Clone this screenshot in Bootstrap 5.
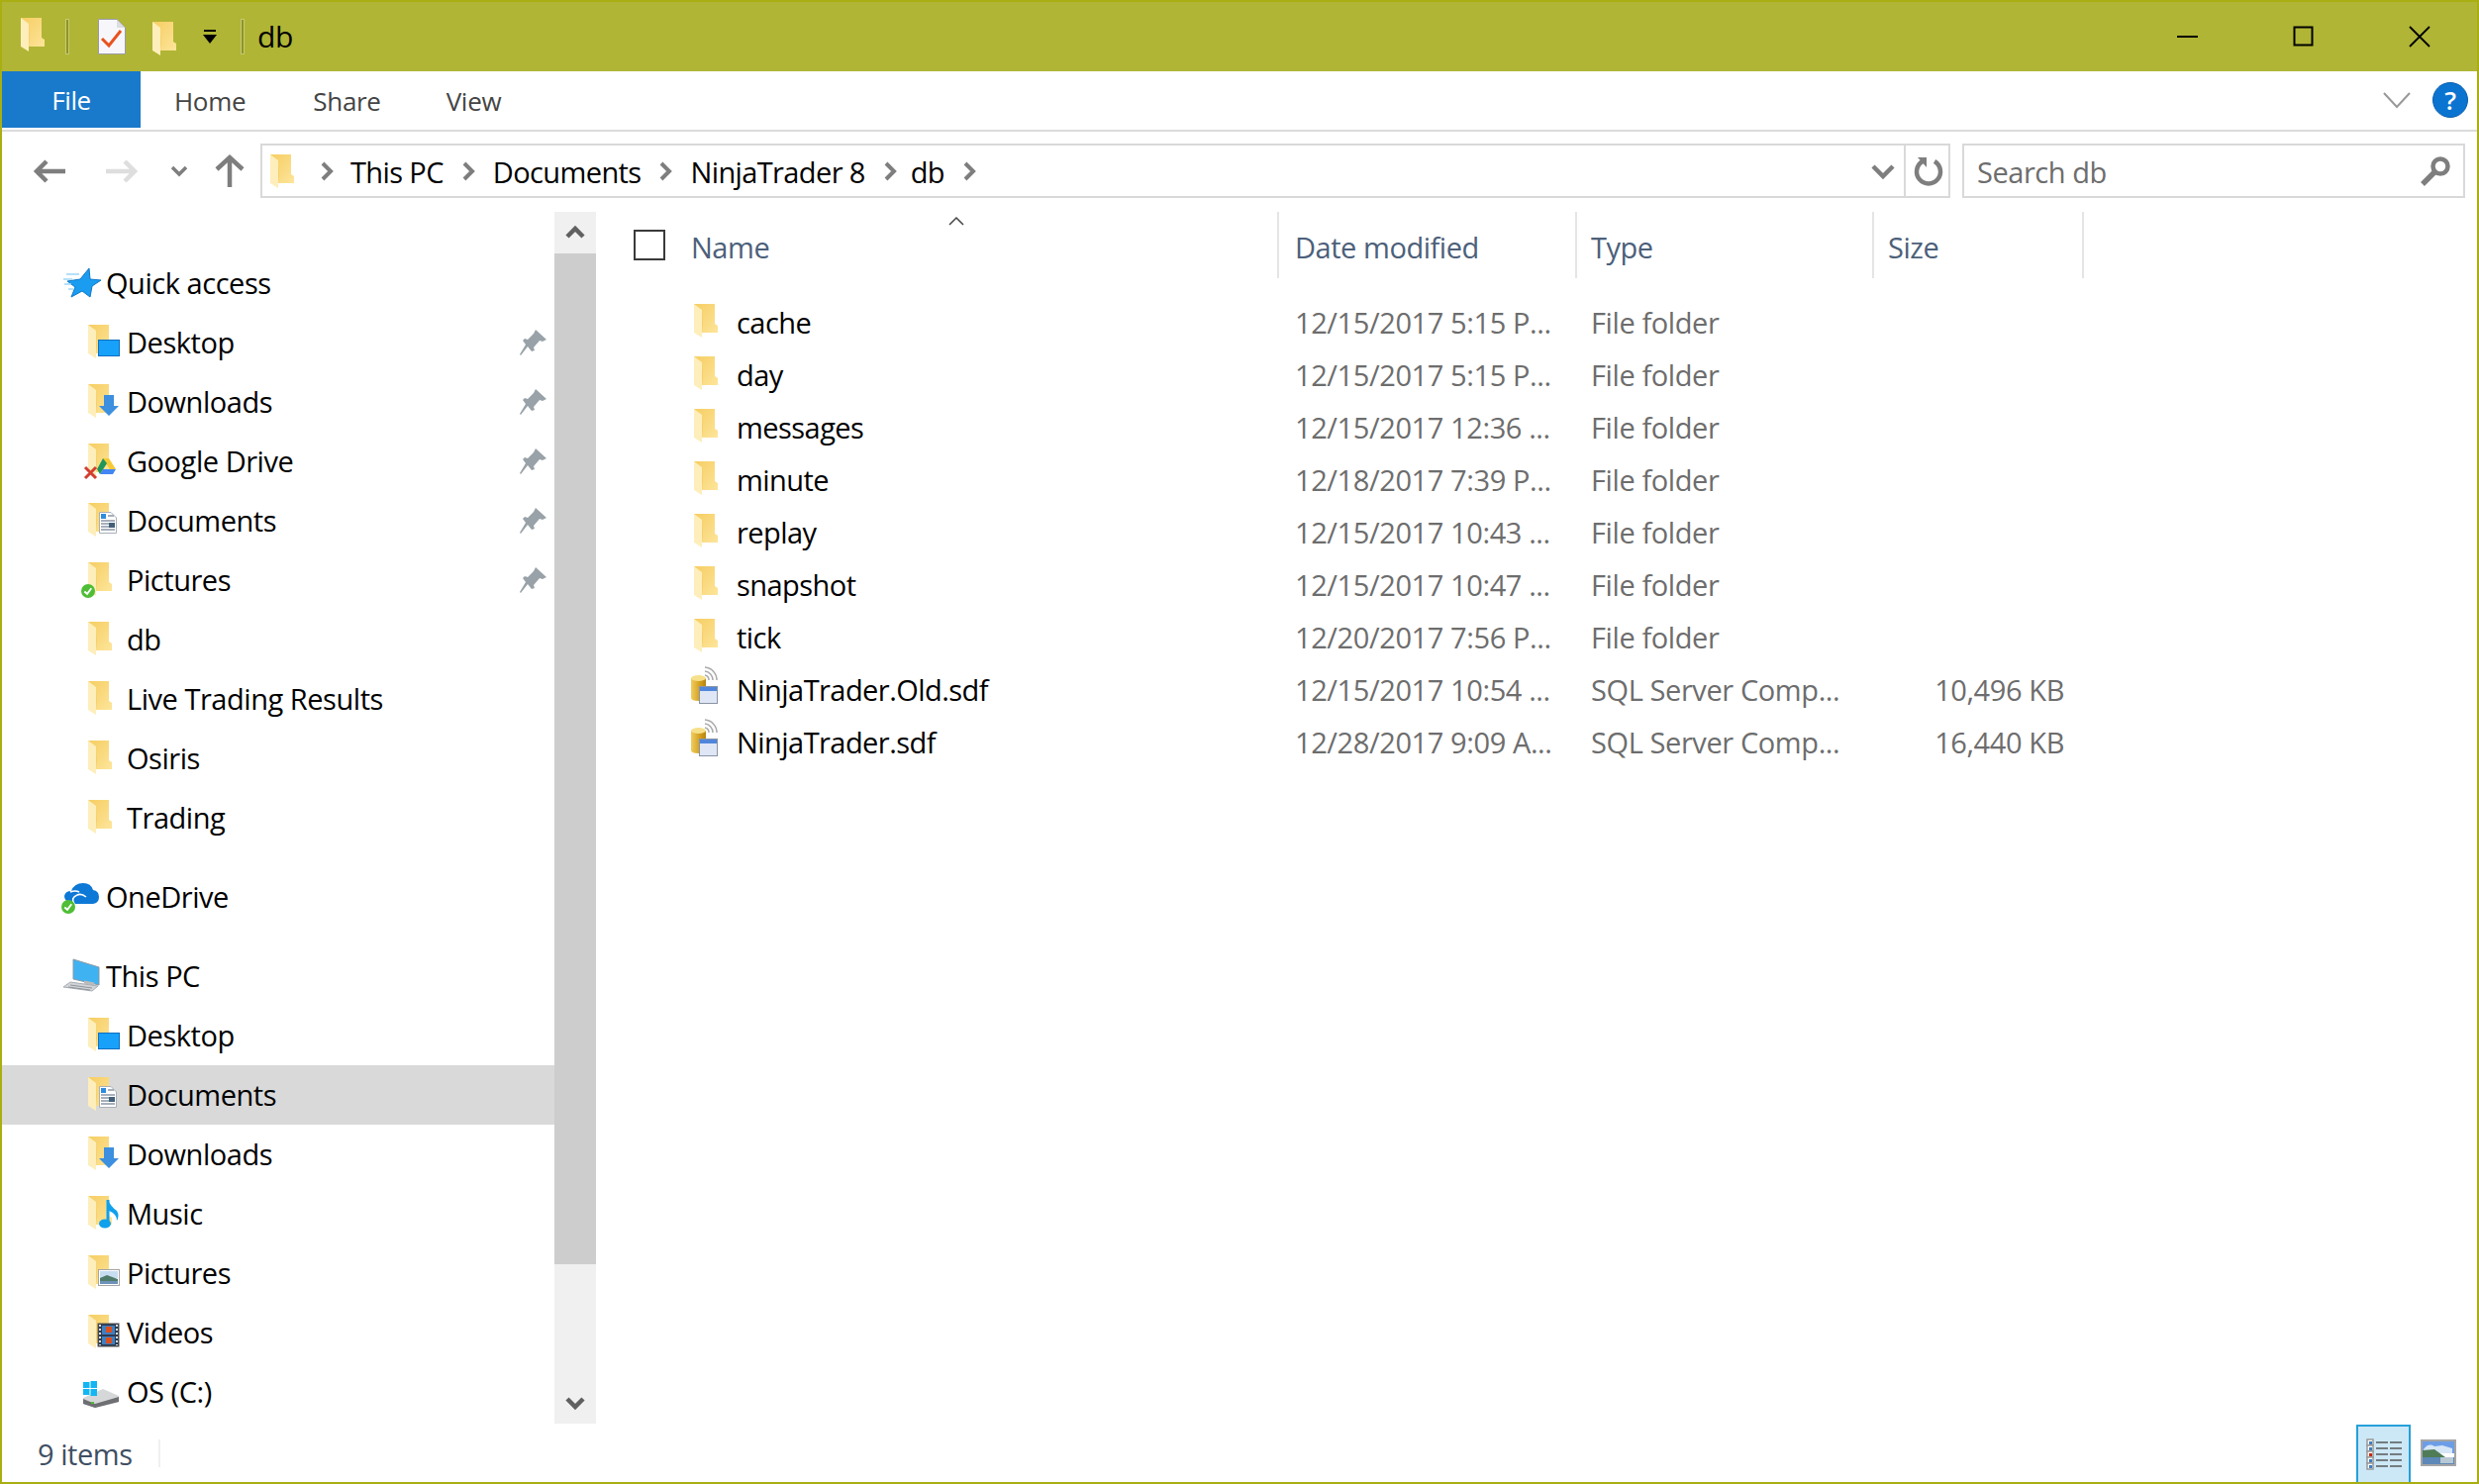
<!DOCTYPE html>
<html lang="en">
<head>
  <meta charset="UTF-8" />
  <title>db</title>
  <link href="https://cdn.jsdelivr.net/npm/bootstrap@5.3.0/dist/css/bootstrap.min.css" rel="stylesheet">
  <style>
    html, body { height: 100%; }
    body {
      margin: 0; overflow: hidden; background: #fff; color: #000;
      font-family: "Open Sans", "Noto Sans", sans-serif; font-size: 29px; letter-spacing: -.46px; line-height: 1;
    }
    svg { display: block; flex: none; overflow: visible; }
    .win-frame { height: 100vh; border: 2px solid #a9ae12; }

    /* title bar */
    .title-strip { height: 70px; background: #b0b535; padding-left: 19px; flex: none; }
    .title-sep { width: 4px; height: 36px; border: 1px solid #c6ca72; background: #8f9428; }
    .title-name { font-size: 30px; margin-left: 13px; }
    .title-mark { margin-bottom: 4px; }
    .title-sep.first { margin-left: 21px; }
    .title-doc { margin-left: 29px; }
    .title-folder { margin-left: 27px; margin-top: 4px; }
    .title-drop { margin-left: 27px; }
    .title-sep.second { margin-left: 24px; }
    .win-slot { width: 117px; display: flex; justify-content: center; }

    /* ribbon */
    .ribbon-tabs { height: 61px; border-bottom: 2px solid #dadbdc; flex: none; }
    .tab-file { width: 140px; height: 57px; background: #1979ca; color: #fff; font-size: 26px; }
    .tab-plain { font-size: 26px; letter-spacing: -.3px; color: #444; margin-left: 68px; }
    .tab-plain.first { margin-left: 34px; }
    .tab-plain.last { margin-left: 66px; }
    .ribbon-fold { margin-bottom: 2px; }
    .help-dot {
      width: 36px; height: 36px; border-radius: 50%; background: #0b74d1; color: #fff;
      font-size: 26px; border: 1px solid #0a5fae; font-weight: 600; margin: 0 9px 2px 22px;
    }

    /* address row */
    .addr-row { height: 81px; padding-top: 12px; flex: none; }
    .addr-nav { height: 55px; padding-left: 32px; }
    .nav-forward { margin-left: 41px; }
    .nav-recent { margin-left: 33px; }
    .nav-up { margin-left: 27px; }
    .addr-box { width: 1707px; height: 55px; border: 2px solid #d9d9d9; margin-left: 16px; padding-left: 8px; }
    .crumb-arrow { margin-left: 18px; }
    .crumb-arrow.first { margin-left: 26px; }
    .crumb { margin: 2px 0 0 18px; letter-spacing: -.62px; }
    .crumb.first { margin-left: 17px; }
    .crumb.last { margin-left: 14px; }
    .addr-drop { margin-right: 9px; }
    .addr-end { border-left: 2px solid #d9d9d9; width: 45px; height: 100%; }
    .search-box { width: 508px; height: 55px; border: 2px solid #d9d9d9; margin-left: 12px; padding: 0 12px 0 13px; color: #6d6d6d; }
    .search-text { margin-top: 2px; }

    /* navigation pane */
    .nav-pane { width: 558px; padding-top: 42px; flex: none; }
    .nav-item-row { height: 60px; padding-right: 8px; }
    .nav-item-row.is-top { padding-left: 61px; }
    .nav-item-row.is-sub { padding-left: 82px; }
    .nav-item-row.is-picked { background: #d9d9d9; }
    .nav-label { margin-bottom: 2px; }
    .nav-gap { height: 20px; }
    .nav-scroll { width: 42px; background: #f0f0f0; flex: none; }
    .nav-scroll-head { height: 42px; padding-bottom: 3px; }
    .nav-scroll-thumb { height: 1021px; background: #cdcdcd; }
    .nav-scroll-foot { padding-bottom: 13px; }
    .pane-split { width: 8px; flex: none; }

    /* file list */
    .file-head, .file-row { display: grid; grid-template-columns: 682px 301px 300px 212px; }
    .file-head { height: 67px; color: #4c607a; margin-bottom: 18px; }
    .head-cell { border-right: 2px solid #e5e5e5; height: 67px; }
    .head-label { margin-top: 4px; }
    .head-date, .cell-date { padding-left: 16px; }
    .head-type, .cell-type { padding-left: 14px; }
    .head-size { padding-left: 14px; }
    .file-row { height: 53px; align-items: center; }
    .check-box { width: 32px; height: 31px; border: 2px solid #3a3a3a; margin: 0 26px 0 30px; }
    .sort-caret { position: absolute; left: 348px; top: 5px; }
    .cell-name { padding-left: 88px; display: flex; align-items: center; gap: 19px; letter-spacing: -.55px; }
    .cell-grey { color: #6d6d6d; letter-spacing: -.4px; }
    .cell-size { text-align: right; padding-right: 20px; }

    /* status bar */
    .status-strip { height: 59px; flex: none; padding-left: 36px; color: #3f4f63; }
    .status-text { margin-top: 2px; }
    .status-sep { width: 2px; height: 28px; background: #f0f0f0; margin-left: 26px; }
    .view-on { width: 55px; height: 58px; background: #cce8f6; border: 2px solid #26a0da; border-bottom: 0; }
    .view-photo { margin: 0 21px 0 10px; }
  </style>
</head>
<body>
  <svg width="0" height="0" class="position-absolute">
    <defs>
      <linearGradient id="folderFill" x1="0" y1="0" x2="1" y2="1">
        <stop offset="0" stop-color="#f6cd62"/><stop offset="1" stop-color="#fde59a"/>
      </linearGradient>
      <linearGradient id="dbFill" x1="0" y1="0" x2="1" y2="0">
        <stop offset="0" stop-color="#f0cd62"/><stop offset=".6" stop-color="#d49f1c"/><stop offset="1" stop-color="#b58410"/>
      </linearGradient>
      <symbol id="folder" viewBox="0 0 24 34">
        <path fill="url(#folderFill)" d="M0 0H21V20L24 22V29H7Z"/>
        <path fill="#fdeebb" d="M0 0L8 6V34L0 29Z"/>
        <path fill="#f2c65c" d="M8 6V29L9 21Z" opacity=".6"/>
      </symbol>
      <symbol id="pin" viewBox="0 0 27 26">
        <path fill="#98a2a8" d="M16 0L27 10L23 12L20 11L14 18L15 21L12 22L8 17L1 26L0 25L6 15L3 11L5 9L8 10L14 4Z"/>
      </symbol>
      <symbol id="dbfile" viewBox="0 0 27 38">
        <path fill="none" stroke="#aaa" stroke-width="1.500" d="M14 1A13 13 0 0 1 26 14M14 5A9 9 0 0 1 22 14M14 9A5 5 0 0 1 18 14"/>
        <path fill="url(#dbFill)" d="M0 12H15V22H8V35Q0 35 0 32Z"/>
        <ellipse cx="7.500" cy="12" rx="7.500" ry="3" fill="#f6e08a"/>
        <rect x="8.500" y="20.500" width="18" height="17" fill="#dfe6f5" stroke="#8a93a5"/>
        <rect x="9" y="21" width="17" height="4" fill="#4f86dc"/>
      </symbol>
      <symbol id="check" viewBox="0 0 15 15">
        <circle cx="7.500" cy="7.500" r="7.500" fill="#4fbe36"/>
        <path d="M3.500 8L6.500 10.500L11 4.500" fill="none" stroke="#fff" stroke-width="2"/>
      </symbol>
      <symbol id="crumbArrow" viewBox="0 0 14 20">
        <path d="M3 2L11 10L3 18" fill="none" stroke="#7e7e7e" stroke-width="4"/>
      </symbol>
    </defs>
  </svg>

  <div class="win-frame d-flex flex-column">
    <!-- Title bar -->
    <div class="title-strip d-flex align-items-center">
      <svg width="24" height="34" class="title-mark"><use href="#folder"/></svg>
      <span class="title-sep first"></span>
      <svg width="28" height="36" class="title-doc" viewBox="0 0 28 36">
        <path fill="#f7f7fb" stroke="#9a9aa8" d="M.5.5H19L27.500 9V35.500H.5Z"/>
        <path fill="#dcdce4" d="M19 1V9H27Z"/>
        <path fill="none" stroke="#e8521f" stroke-width="3" d="M4 20L11 27L23 12"/>
      </svg>
      <svg width="24" height="34" class="title-folder"><use href="#folder"/></svg>
      <svg width="14" height="15" viewBox="0 0 14 15" class="title-drop">
        <rect x="1" width="12" height="2"/><path d="M0 5H14L7 14Z"/>
      </svg>
      <span class="title-sep second"></span>
      <span class="title-name">db</span>
      <div class="d-flex align-items-center ms-auto">
        <div class="win-slot"><svg width="22" height="22" viewBox="0 0 22 22"><rect y="10" width="21" height="2"/></svg></div>
        <div class="win-slot"><svg width="22" height="22" viewBox="0 0 22 22"><rect x="1.500" y="1.500" width="18" height="18" fill="none" stroke="#000" stroke-width="2"/></svg></div>
        <div class="win-slot"><svg width="22" height="22" viewBox="0 0 22 22"><path d="M1 1L21 21M21 1L1 21" stroke="#000" stroke-width="1.800"/></svg></div>
      </div>
    </div>

    <!-- Ribbon tabs -->
    <div class="ribbon-tabs d-flex">
      <div class="tab-file d-flex align-items-center justify-content-center">File</div>
      <span class="tab-plain first align-self-center">Home</span>
      <span class="tab-plain align-self-center">Share</span>
      <span class="tab-plain last align-self-center">View</span>
      <svg width="28" height="16" viewBox="0 0 28 16" class="ribbon-fold ms-auto align-self-center"><path d="M1 1L14 15L27 1" fill="none" stroke="#999" stroke-width="2"/></svg>
      <div class="help-dot d-flex align-items-center justify-content-center align-self-center">?</div>
    </div>

    <!-- Address row -->
    <div class="addr-row d-flex align-items-start">
      <div class="addr-nav d-flex align-items-center">
        <svg width="32" height="24" viewBox="0 0 32 24"><path d="M13 2L3 12L13 22M3 12H32" fill="none" stroke="#7e7e7e" stroke-width="4.500"/></svg>
        <svg width="32" height="24" viewBox="0 0 32 24" class="nav-forward"><path d="M19 2L29 12L19 22M29 12H0" fill="none" stroke="#dedede" stroke-width="4.500"/></svg>
        <svg width="18" height="12" viewBox="0 0 18 12" class="nav-recent"><path d="M2 2L9 9L16 2" fill="none" stroke="#7e7e7e" stroke-width="3.500"/></svg>
        <svg width="30" height="32" viewBox="0 0 30 32" class="nav-up"><path d="M2 14L15 2L28 14M15 2V32" fill="none" stroke="#7e7e7e" stroke-width="4.500"/></svg>
      </div>
      <div class="addr-box d-flex align-items-center">
        <svg width="24" height="34"><use href="#folder"/></svg>
        <svg class="crumb-arrow first" width="14" height="20"><use href="#crumbArrow"/></svg>
        <span class="crumb first">This PC</span>
        <svg class="crumb-arrow" width="14" height="20"><use href="#crumbArrow"/></svg>
        <span class="crumb">Documents</span>
        <svg class="crumb-arrow" width="14" height="20"><use href="#crumbArrow"/></svg>
        <span class="crumb">NinjaTrader 8</span>
        <svg class="crumb-arrow" width="14" height="20"><use href="#crumbArrow"/></svg>
        <span class="crumb last">db</span>
        <svg class="crumb-arrow" width="14" height="20"><use href="#crumbArrow"/></svg>
        <svg width="24" height="16" viewBox="0 0 24 16" class="addr-drop ms-auto"><path d="M2 3L12 13L22 3" fill="none" stroke="#7e7e7e" stroke-width="4.500"/></svg>
        <div class="addr-end d-flex align-items-center justify-content-center">
          <svg width="30" height="30" viewBox="0 0 30 30"><path d="M10 5A12 12 0 1 0 22 5" fill="none" stroke="#7e7e7e" stroke-width="4.500"/><path d="M5 1H14V11Z" fill="#7e7e7e"/></svg>
        </div>
      </div>
      <div class="search-box d-flex align-items-center justify-content-between">
        <span class="search-text">Search db</span>
        <svg width="32" height="30" viewBox="0 0 32 30"><circle cx="21" cy="10" r="7.500" fill="none" stroke="#7e7e7e" stroke-width="4.500"/><path d="M15 16L3 28" stroke="#7e7e7e" stroke-width="5.500"/></svg>
      </div>
    </div>

    <!-- Panes -->
    <div class="d-flex flex-grow-1 overflow-hidden">
      <div class="nav-pane" id="navPane"></div>
      <div class="nav-scroll d-flex flex-column">
        <div class="nav-scroll-head d-flex align-items-center justify-content-center">
          <svg width="20" height="14" viewBox="0 0 20 14"><path d="M2 12L10 4L18 12" fill="none" stroke="#606060" stroke-width="4.500"/></svg>
        </div>
        <div class="nav-scroll-thumb"></div>
        <div class="nav-scroll-foot d-flex align-items-end justify-content-center flex-grow-1">
          <svg width="20" height="14" viewBox="0 0 20 14"><path d="M2 2L10 10L18 2" fill="none" stroke="#606060" stroke-width="4.500"/></svg>
        </div>
      </div>
      <div class="pane-split"></div>
      <div class="flex-grow-1">
        <div class="file-head">
          <div class="head-cell position-relative d-flex align-items-center">
            <span class="check-box"></span><span class="head-label">Name</span>
            <svg class="sort-caret" width="16" height="9" viewBox="0 0 16 9"><path d="M1 8L8 1L15 8" fill="none" stroke="#444" stroke-width="1.500"/></svg>
          </div>
          <div class="head-cell head-date d-flex align-items-center"><span class="head-label">Date modified</span></div>
          <div class="head-cell head-type d-flex align-items-center"><span class="head-label">Type</span></div>
          <div class="head-cell head-size d-flex align-items-center"><span class="head-label">Size</span></div>
        </div>
        <div id="fileRows"></div>
      </div>
    </div>

    <!-- Status bar -->
    <div class="status-strip d-flex align-items-center">
      <span class="status-text">9 items</span>
      <span class="status-sep"></span>
      <div class="view-on d-flex align-items-center justify-content-center ms-auto">
        <svg width="36" height="32" viewBox="0 0 36 32">
          <g fill="#fff" stroke="#999" stroke-width="1.500">
            <rect x="1" y="1" width="6" height="6"/><rect x="1" y="7" width="6" height="6"/><rect x="1" y="13" width="6" height="6"/><rect x="1" y="19" width="6" height="6"/><rect x="1" y="25" width="6" height="6"/>
          </g>
          <path fill="#3f7fc0" d="M3 3h3v3H3zM3 9h3v3H3zM3 21h3v3H3zM3 27h3v3H3z"/>
          <path fill="#c62a10" d="M3 15h3v3H3z"/>
          <path stroke="#747c80" stroke-width="2" d="M10 4H22M24 4H36M10 10H22M24 10H36M10 16H22M24 16H36M10 22H22M24 22H36M10 28H22M24 28H36"/>
        </svg>
      </div>
      <svg width="36" height="27" viewBox="0 0 36 27" class="view-photo">
        <rect x="1" y="1" width="34" height="25" fill="#fff" stroke="#a5a5a5" stroke-width="2"/>
        <rect x="2" y="2" width="32" height="12" fill="#6c9de6"/>
        <path fill="#d6e6f7" d="M3 10Q8 3 14 7L22 6L32 9V14H3Z"/>
        <path fill="#4f7c57" d="M2 11L14 10L25 18H2Z"/>
        <rect x="2" y="18" width="32" height="7" fill="#5d88b8"/>
        <rect x="20" y="18" width="13" height="6" fill="#b8c8d4"/>
      </svg>
    </div>
  </div>

  <script>
    const folder = '<use href="#folder" x="5" y="3" width="24" height="34"/>';
    const overlays = {
      desktop: '<rect x="15.500" y="18.500" width="21" height="16" fill="#17a1fa" stroke="#0f6fc0"/>',
      downloads: '<path d="M21 14H31V25H36L26 35L16 25H21Z" fill="#3d8fdf"/>',
      drive: '<path d="M20 18H26L33 29H27Z" fill="#f7c934"/><path d="M20 18L14 29L17 34L24 23Z" fill="#20965a"/><path d="M17 34H30L33 29H20Z" fill="#4285f4"/><path d="M2 27L13 38M13 27L2 38" stroke="#d23f31" stroke-width="3"/>',
      documents: '<path d="M16.500 12.500H28L33.500 18V33.500H16.500Z" fill="#fff" stroke="#a9b0b8"/><path d="M18 14h5v5h-5z" fill="#2e8ce0"/><path d="M25 16H31M18 21H32M18 24H26M18 27H26M18 30H32" stroke="#8a96a6" stroke-width="1.300"/><rect x="26" y="23" width="6" height="5" fill="#42607a"/>',
      pictures: '<use href="#check" x="-2" y="25" width="14" height="14"/>',
      music: '<path d="M25 7V30" stroke="#10a0ec" stroke-width="3"/><path d="M25 7Q28 14 34 18Q37 23 34 28Q34 21 26 18Z" fill="#10a0ec"/><ellipse cx="22" cy="31" rx="6" ry="4.500" fill="#10a0ec"/>',
      photos: '<rect x="15.500" y="17.500" width="21" height="16" fill="#fff" stroke="#a5a5a5"/><rect x="17" y="19" width="18" height="7" fill="#c7ddf0"/><path d="M17 26L24 23L35 27V32H17Z" fill="#4f7c6a"/><rect x="17" y="29" width="18" height="3" fill="#6e93b8"/>',
      videos: '<rect x="15" y="12" width="21" height="23" fill="#2c3a50" stroke="#555"/><path d="M19 14h13v9H19z" fill="#3f7fc0"/><path d="M19 25h13v8H19z" fill="#3f7fc0"/><path d="M23 15h6v6h-6zM23 26h6v6h-6z" fill="#d94f1f"/><path d="M17 13v21M34 13v21" stroke="#ddd" stroke-width="2" stroke-dasharray="2 2"/>'
    };
    const topIcons = {
      quick: '<path d="M27 6L28 17L39 18L30 24L28 35L20 29L9 35L13 25L5 19L18 17Z" fill="#1a9cf0" stroke="#0f79c8"/><path d="M1 17H10M4 12H17M2 22H9M6 27H11" stroke="#9fd6f8" stroke-width="1.300"/>',
      onedrive: '<path d="M7 26Q2 25 2 20Q3 15 9 15Q12 7 21 7Q29 7 31 14Q37 15 37 21Q37 27 31 28H9Z" fill="#0d78d6"/><path d="M8 16Q13 14 17 16M8 28H12Q8 22 15 19Q19 17 24 21" fill="none" stroke="#fff" stroke-width="1.600"/><use href="#check" x="-1" y="24" width="14" height="14"/>',
      thispc: '<path d="M11 4L37 12V30L11 24Z" fill="#3fb2f2" stroke="#8a9aa5"/><path d="M22 27L32 29" stroke="#bbb" stroke-width="3"/><path d="M8 27L36 31L30 36L1 32Z" fill="#d2d5d8" stroke="#a9adb3"/><path d="M8 30L30 33M6 32L28 35" stroke="#8f959c" stroke-width="1"/>'
    };
    const osIcon = '<path d="M0 27L20 18L36 25V31L12 37L0 33Z" fill="#d5d7d9"/><path d="M0 28L12 33L36 26V31L12 37L0 33Z" fill="#6d6f72"/><rect x="8" y="31" width="3" height="2" fill="#4fbe36"/><g fill="#13b6f3"><rect y="11" width="6.500" height="6"/><rect x="7.500" y="10" width="6.500" height="7"/><rect y="18" width="6.500" height="6"/><rect x="7.500" y="18" width="6.500" height="7"/></g>';

    const nav = [
      ['top', 'quick', 'Quick access'],
      ['sub', 'desktop', 'Desktop', true], ['sub', 'downloads', 'Downloads', true],
      ['sub', 'drive', 'Google Drive', true], ['sub', 'documents', 'Documents', true],
      ['sub', 'pictures', 'Pictures', true], ['sub', '', 'db'],
      ['sub', '', 'Live Trading Results'], ['sub', '', 'Osiris'], ['sub', '', 'Trading'],
      ['gap'], ['top', 'onedrive', 'OneDrive'], ['gap'], ['top', 'thispc', 'This PC'],
      ['sub', 'desktop', 'Desktop'], ['sub', 'documents', 'Documents', false, true],
      ['sub', 'downloads', 'Downloads'], ['sub', 'music', 'Music'],
      ['sub', 'photos', 'Pictures'], ['sub', 'videos', 'Videos'], ['sub', 'os', 'OS (C:)']
    ];

    document.getElementById('navPane').innerHTML = nav.map(n => {
      if (n[0] === 'gap') return '<div class="nav-gap"></div>';
      let art;
      if (n[0] === 'top') art = topIcons[n[1]];
      else if (n[1] === 'os') art = osIcon;
      else art = folder + (overlays[n[1]] || '');
      const pin = n[3] ? '<svg width="27" height="26" class="ms-auto"><use href="#pin"/></svg>' : '';
      return `<div class="nav-item-row is-${n[0]} d-flex align-items-center ${n[4] ? 'is-picked' : ''}">
        <svg width="44" height="42" viewBox="0 0 44 42">${art}</svg><span class="nav-label">${n[2]}</span>${pin}</div>`;
    }).join('');

    const files = [
      ['cache', '12/15/2017 5:15 P...', 'File folder', ''],
      ['day', '12/15/2017 5:15 P...', 'File folder', ''],
      ['messages', '12/15/2017 12:36 ...', 'File folder', ''],
      ['minute', '12/18/2017 7:39 P...', 'File folder', ''],
      ['replay', '12/15/2017 10:43 ...', 'File folder', ''],
      ['snapshot', '12/15/2017 10:47 ...', 'File folder', ''],
      ['tick', '12/20/2017 7:56 P...', 'File folder', ''],
      ['NinjaTrader.Old.sdf', '12/15/2017 10:54 ...', 'SQL Server Comp...', '10,496 KB'],
      ['NinjaTrader.sdf', '12/28/2017 9:09 A...', 'SQL Server Comp...', '16,440 KB']
    ];

    document.getElementById('fileRows').innerHTML = files.map(f => {
      const icon = f[3]
        ? '<svg width="27" height="48"><use href="#dbfile" width="27" height="38"/></svg>'
        : '<svg width="27" height="38"><use href="#folder" x="3" width="24" height="34"/></svg>';
      return `<div class="file-row">
        <div class="cell-name">${icon}<span>${f[0]}</span></div>
        <div class="cell-grey cell-date">${f[1]}</div>
        <div class="cell-grey cell-type">${f[2]}</div>
        <div class="cell-grey cell-size">${f[3]}</div>
      </div>`;
    }).join('');
  </script>
  <script src="https://cdn.jsdelivr.net/npm/bootstrap@5.3.0/dist/js/bootstrap.bundle.min.js"></script>
</body>
</html>
